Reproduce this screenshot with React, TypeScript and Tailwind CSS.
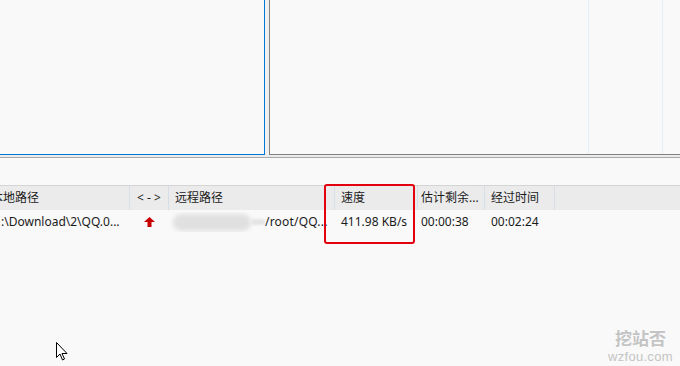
import React from 'react';

const columns = [
  { key: 'local', label: '本地路径', width: 'w-[130px]', pad: 'pl-0' },
  { key: 'dir', label: '< - >', width: 'w-[39px]', pad: 'justify-center' },
  { key: 'remote', label: '远程路径', width: 'w-[166px]', pad: 'pl-[6px]' },
  { key: 'speed', label: '速度', width: 'w-[83px]', pad: 'pl-[6px]' },
  { key: 'eta', label: '估计剩余...', width: 'w-[67px]', pad: 'pl-[3px]' },
  { key: 'elapsed', label: '经过时间', width: 'w-[70px]', pad: 'pl-[6px]' },
];

function UpArrow() {
  return (
    <svg width="11" height="10" viewBox="0 0 11 10">
      <path d="M5.5 0 L11 5 L7.5 5 L7.5 10 L3.5 10 L3.5 5 L0 5 Z" fill="#c80000" />
    </svg>
  );
}

function Cursor() {
  return (
    <svg width="12" height="19" viewBox="0 0 12 19">
      <path
        d="M0.5 0.5 L0.5 15.5 L4 12 L6.5 18 L8.5 17 L6 11.5 L11 11.5 Z"
        fill="#ffffff"
        stroke="#000000"
        strokeWidth="1"
        strokeLinejoin="miter"
      />
    </svg>
  );
}

export default function App() {
  return (
    <div
      className="relative w-[680px] h-[366px] overflow-hidden bg-[#f9f9f9] text-[12px] text-[#1b1b1b]"
      style={{ fontFamily: '"Noto Sans", "Noto Sans CJK SC", sans-serif' }}
    >
      {/* file panes */}
      <div className="flex h-[155px] bg-[#f0f0f0]">
        <div className="w-[265px] bg-[#f9f9f9] border-r border-b border-[#0078d7]" />
        <div className="ml-[4px] flex-1 flex bg-[#f9f9f9] border-l border-b border-[#828282]">
          <div className="w-[319px] border-r border-[#e6eefa]" />
          <div className="w-[74px] border-r border-[#e6eefa]" />
          <div className="flex-1" />
        </div>
      </div>
      <div className="h-[3px] bg-[#ececec] border-b border-[#a9a9a9]" />

      {/* transfer queue */}
      <div className="mt-[27px] border-t border-[#d4d4d4]">
        <div className="flex h-[24px] bg-[#ebebeb]">
          {columns.map((c) => (
            <div
              key={c.key}
              className={`${c.width} ${c.pad} flex items-center overflow-hidden whitespace-nowrap border-r border-[#d8dee6]`}
            >
              {c.key === 'local' ? <span className="-ml-[9px]">{c.label}</span> : <span>{c.label}</span>}
            </div>
          ))}
          <div className="flex-1" />
        </div>

        <div className="flex h-[24px] items-center whitespace-nowrap">
          <div className="w-[130px] pl-[1px] overflow-hidden">:\Download\2\QQ.0...</div>
          <div className="w-[39px] flex justify-center">
            <UpArrow />
          </div>
          <div className="w-[166px] flex items-center pl-[4px] overflow-hidden">
            <div className="w-[92px] h-[20px] flex items-center">
              <div className="w-[78px] h-[17px] rounded-full bg-[#e0e0e0] blur-[2px]" />
              <div className="w-[14px] h-[6px] rounded-full bg-[#e4e4e4] blur-[1px]" />
            </div>
            <span className="tracking-[0.2px]">/root/QQ...</span>
          </div>
          <div className="w-[83px] pl-[6px]">411.98 KB/s</div>
          <div className="w-[67px] pl-[3px]">00:00:38</div>
          <div className="w-[70px] pl-[6px]">00:02:24</div>
        </div>
      </div>

      {/* highlight annotation */}
      <div className="absolute left-[324px] top-[184px] w-[91px] h-[60px] border-2 border-[#e3000f] rounded-[3px]" />

      {/* mouse pointer */}
      <div className="absolute left-[56px] top-[342px]">
        <Cursor />
      </div>

      {/* watermark */}
      <div className="absolute left-[608px] top-[329px] flex flex-col items-center text-[#c4c4c4]">
        <span
          className="text-[17px] leading-[18px] font-bold"
          style={{ fontFamily: '"Noto Sans CJK SC", sans-serif' }}
        >
          挖站否
        </span>
        <span
          className="mt-[3px] text-[13px] leading-[14px] tracking-[0.3px]"
          style={{ fontFamily: '"Liberation Sans", sans-serif' }}
        >
          wzfou.com
        </span>
      </div>
    </div>
  );
}
